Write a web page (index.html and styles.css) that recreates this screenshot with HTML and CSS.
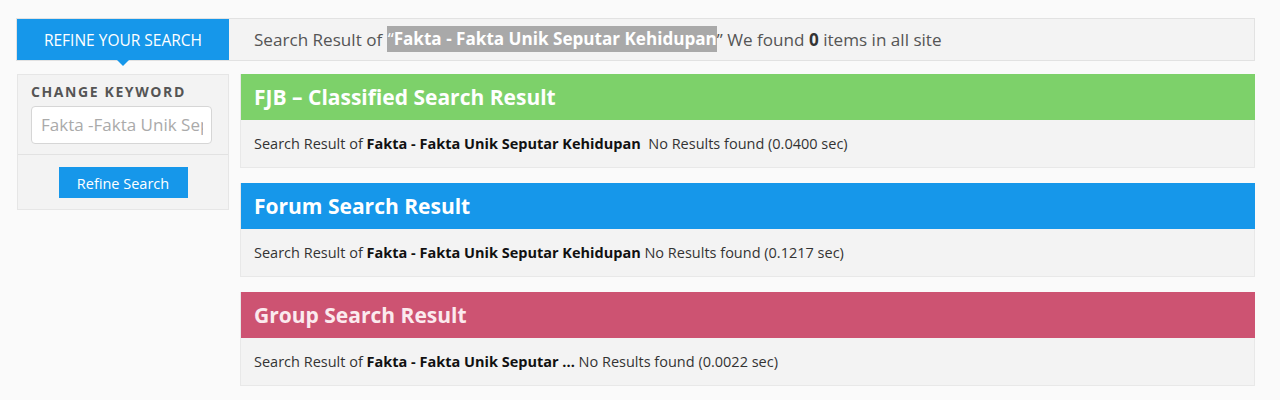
FILE: index.html
```html
<!DOCTYPE html>
<html>
<head>
<meta charset="utf-8">
<link rel="stylesheet" href="styles.css">
</head>
<body>
<div class="wrap">
  <div class="topbar">
    <div class="tab">REFINE YOUR SEARCH<span class="arrow"></span></div>
    <div class="summary">Search Result of <span class="hl">&ldquo;<b>Fakta - Fakta Unik Seputar Kehidupan</b></span>&rdquo; We found <b class="num">0</b> items in all site</div>
  </div>
  <div class="content">
    <aside class="sidebar">
      <div class="kw">
        <div class="kw-label">CHANGE KEYWORD</div>
        <div class="kw-input"><span class="kw-text">Fakta -Fakta Unik Seputar Kehidupan</span></div>
      </div>
      <div class="actions">
        <button class="btn">Refine Search</button>
      </div>
    </aside>
    <main class="results">
      <section class="result">
        <div class="head green">FJB &ndash; Classified Search Result</div>
        <div class="body">Search Result of <b>Fakta - Fakta Unik Seputar Kehidupan</b>&nbsp; No Results found (0.0400 sec)</div>
      </section>
      <section class="result">
        <div class="head blue">Forum Search Result</div>
        <div class="body">Search Result of <b>Fakta - Fakta Unik Seputar Kehidupan</b> No Results found (0.1217 sec)</div>
      </section>
      <section class="result">
        <div class="head pink">Group Search Result</div>
        <div class="body">Search Result of <b>Fakta - Fakta Unik Seputar ...</b> No Results found (0.0022 sec)</div>
      </section>
    </main>
  </div>
</div>
</body>
</html>
```

FILE: styles.css
```css
* { box-sizing: border-box; }
html, body { margin: 0; padding: 0; }
body {
  background: #fafafa;
  font-family: "Open Sans", "Noto Sans", sans-serif;
  color: #333;
}
.wrap {
  width: 1239px;
  margin: 18px 0 0 16px;
}
.topbar {
  display: flex;
  height: 43px;
  border: 1px solid #e2e2e2;
  background: #f3f3f3;
}
.tab {
  position: relative;
  width: 212px;
  height: 41px;
  background: #1697ea;
  color: #fff;
  font-size: 15.5px;
  display: flex;
  align-items: center;
  justify-content: center;
}
.arrow {
  position: absolute;
  left: 100px;
  bottom: -6px;
  width: 0;
  height: 0;
  border-left: 6px solid transparent;
  border-right: 6px solid transparent;
  border-top: 6px solid #1697ea;
}
.summary {
  padding-left: 25px;
  padding-bottom: 1px;
  display: flex;
  align-items: center;
  font-size: 17.1px;
  color: #555;
  white-space: pre;
}
.summary .hl {
  background: #a9a9a9;
  color: #fff;
  padding: 1px 0 2px 1px;
}
.summary .hl b { font-weight: 700; }
.summary .num { color: #333; }
.content {
  display: flex;
  gap: 11px;
  margin-top: 13px;
}
.sidebar {
  margin-left: 1px;
  width: 212px;
  height: 136px;
  background: #f3f3f3;
  border: 1px solid #e6e6e6;
}
.kw {
  padding: 8px 16px 10px 13px;
  border-bottom: 1px solid #e2e2e2;
}
.kw-label {
  font-size: 14px;
  font-weight: 700;
  letter-spacing: 1.6px;
  color: #555;
  line-height: 17px;
}
.kw-input {
  margin-top: 6px;
  height: 38px;
  background: #fff;
  border: 1px solid #d6d6d6;
  border-radius: 4px;
  padding: 0 8px 0 9px;
  font-size: 17px;
  color: #aaa;
  line-height: 36px;
}
.kw-text {
  display: block;
  overflow: hidden;
  white-space: nowrap;
}
.actions {
  display: flex;
  justify-content: center;
  padding-top: 12px;
}
.btn {
  width: 129px;
  height: 31px;
  border: none;
  background: #1697ea;
  color: #fff;
  font-family: "Open Sans", "Noto Sans", sans-serif;
  font-size: 14.5px;
  padding: 1px 0 0;
}
.results {
  width: 1016px;
  display: flex;
  flex-direction: column;
  gap: 15px;
}
.result {
  border: 1px solid #e8e8e8;
  background: #f3f3f3;
}
.head {
  height: 46px;
  margin: -1px -1px 0 0;
  padding: 0 14px 0 13px;
  display: flex;
  align-items: center;
  color: #fff;
  font-size: 21px;
  font-weight: 700;
}
.head.green { background: #7dd16a; }
.head.blue { background: #1697ea; }
.head.pink { background: #cd5372; color: #fbeaee; }
.body {
  height: 47px;
  padding: 0 13px;
  display: flex;
  align-items: center;
  font-size: 14.5px;
  color: #333;
  white-space: pre;
}
.body b { color: #111; }
```
